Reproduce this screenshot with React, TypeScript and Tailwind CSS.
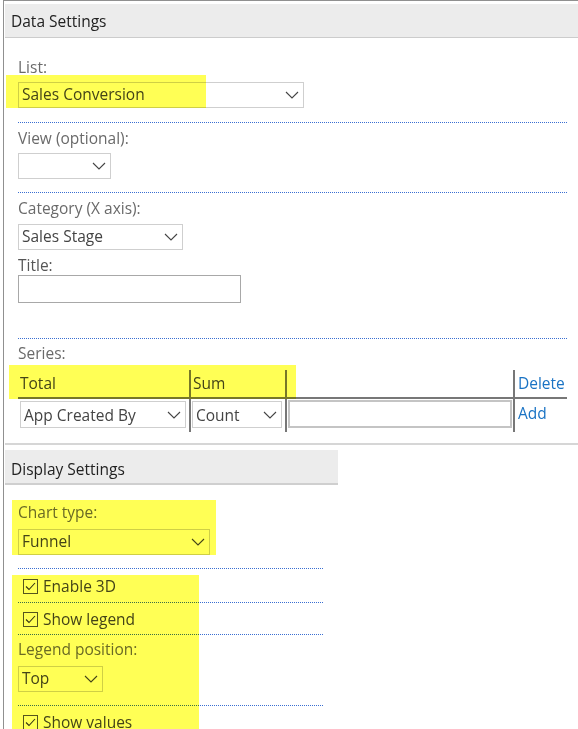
import React from 'react'

// Thin chevron used by every drop-down
function Chevron() {
  return (
    <svg width="14" height="8" viewBox="0 0 14 8" className="shrink-0">
      <path d="M1 1l6 6 6-6" stroke="#444" strokeWidth="1.1" fill="none" />
    </svg>
  )
}

function Select({ value, width }: { value: string; width: string }) {
  return (
    <div
      className={`${width} h-[26px] border border-[#cfcfcf] bg-white flex items-center justify-between pl-[3px] pr-[4px] text-[#444]`}
    >
      <span>{value}</span>
      <Chevron />
    </div>
  )
}

function Dotted({ width, className = '' }: { width: string; className?: string }) {
  return <div className={`${width} border-t border-dotted border-[#3a6fd2] ${className}`} />
}

function Label({ children, className = '' }: { children: React.ReactNode; className?: string }) {
  return <div className={`h-[20px] leading-[20px] text-[#6a6a6a] ${className}`}>{children}</div>
}

function Check({ label, className = '' }: { label: string; className?: string }) {
  return (
    <div className={`flex items-center h-[20px] leading-[20px] pl-[5px] gap-[5px] text-[#444] ${className}`}>
      <div className="w-[15px] h-[15px] border border-[#555] flex items-center justify-center">
        <svg width="11" height="9" viewBox="0 0 11 9">
          <path d="M1 4.5l3 3 6-6.5" stroke="#333" strokeWidth="1.1" fill="none" />
        </svg>
      </div>
      <span>{label}</span>
    </div>
  )
}

// yellow marker strokes laid over the screenshot
function Highlight({ className }: { className: string }) {
  return <div className={`absolute pointer-events-none bg-[#ffff55] mix-blend-multiply ${className}`} />
}

export default function App() {
  return (
    <div className="relative w-[578px] h-[729px] overflow-hidden bg-white font-['Open_Sans',sans-serif] text-[15.5px]">
      <div className="ml-[3px] h-full border-l border-t border-[#909090] pt-[3px]">
        {/* Data Settings */}
        <div className="ml-[1px] h-[34px] bg-[#ececec] border-b border-[#cccccc] pl-[6px] pt-[6px] leading-[22px] text-[#222]">
          Data Settings
        </div>

        <div className="pl-[14px]">
          <Label className="mt-[19px]">List:</Label>
          <Select value="Sales Conversion" width="w-[286px] mt-[5px]" />
          <Dotted width="w-[549px]" className="mt-[14px]" />

          <Label className="mt-[5px]">View (optional):</Label>
          <Select value="" width="w-[93px] mt-[5px]" />
          <Dotted width="w-[549px]" className="mt-[13px]" />

          <Label className="mt-[5px]">Category (X axis):</Label>
          <Select value="Sales Stage" width="w-[165px] mt-[6px]" />
          <Label className="mt-[5px] !text-[#555]">Title:</Label>
          <div className="w-[223px] h-[28px] border border-[#a8a8a8]" />
          <Dotted width="w-[549px]" className="mt-[35px]" />

          <Label className="mt-[4px]">Series:</Label>
          <div className="flex mt-[7px] w-[549px] leading-[20px]">
            <div className="w-[173px] border-r-2 border-[#777]">
              <div className="h-[29px] border-b-2 border-[#777] pl-[2px] pt-[3px] text-[#444]">Total</div>
              <div className="h-[33px] pt-[2px] pl-[2px] pr-[3px]">
                <Select value="App Created By" width="w-full h-[27px]" />
              </div>
            </div>
            <div className="w-[96px] border-r-2 border-[#777]">
              <div className="h-[29px] border-b-2 border-[#777] pl-[2px] pt-[3px] text-[#444]">Sum</div>
              <div className="h-[33px] pt-[2px] pl-[1px] pr-[3px]">
                <Select value="Count" width="w-full h-[27px]" />
              </div>
            </div>
            <div className="w-[228px] border-r-2 border-[#777]">
              <div className="h-[29px] border-b-2 border-[#777]" />
              <div className="h-[33px] pt-[1px] pl-[1px] pr-[1px]">
                <div className="w-full h-[28px] border-2 border-[#c4c4c4]" />
              </div>
            </div>
            <div className="flex-1">
              <div className="h-[29px] border-b-2 border-[#777] pl-[3px] pt-[3px] text-[#1a73c4]">Delete</div>
              <div className="h-[33px] pl-[3px] pt-[4px] text-[#1a73c4]">Add</div>
            </div>
          </div>
        </div>

        <div className="ml-[1px] mt-[11px] border-t-2 border-[#d6d6d6]" />

        {/* Display Settings */}
        <div className="ml-[1px] mt-[5px] w-[333px] h-[35px] bg-[#ececec] border-b-2 border-[#cfcfcf] pl-[6px] pt-[8px] leading-[22px] text-[#222]">
          Display Settings
        </div>

        <div className="pl-[14px]">
          <Label className="mt-[17px]">Chart type:</Label>
          <Select value="Funnel" width="w-[192px] mt-[7px]" />
          <Dotted width="w-[305px]" className="mt-[13px]" />
          <Check label="Enable 3D" className="mt-[7px]" />
          <Dotted width="w-[305px]" className="mt-[6px]" />
          <Check label="Show legend" className="mt-[6px]" />
          <Dotted width="w-[305px]" className="mt-[5px]" />
          <Label className="mt-[4px]">Legend position:</Label>
          <Select value="Top" width="w-[85px] mt-[7px]" />
          <Dotted width="w-[305px]" className="mt-[13px]" />
          <Check label="Show values" className="mt-[6px]" />
        </div>
      </div>

      <Highlight className="left-[6px] top-[75px] w-[200px] h-[33px]" />
      <Highlight className="left-[9px] top-[365px] w-[287px] h-[34px]" />
      <Highlight className="left-[12px] top-[500px] w-[204px] h-[55px]" />
      <Highlight className="left-[12px] top-[575px] w-[187px] h-[154px]" />
    </div>
  )
}
